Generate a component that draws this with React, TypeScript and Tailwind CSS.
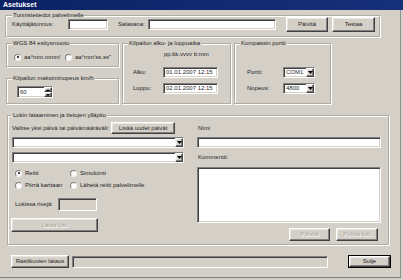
import React from "react";

const sunken =
  "border border-t-[#808080] border-l-[#808080] border-r-white border-b-white shadow-[inset_1px_1px_0_#404040,inset_-1px_-1px_0_#d4d0c8]";
const raised =
  "bg-[#d4d0c8] border border-t-white border-l-white border-r-[#404040] border-b-[#404040] shadow-[inset_-1px_-1px_0_#808080,inset_1px_1px_0_#e8e6e0]";

type BtnProps = {
  children: React.ReactNode;
  className?: string;
  disabled?: boolean;
};

function Btn({ children, className = "", disabled }: BtnProps) {
  return (
    <div
      className={`${raised} flex items-center justify-center shrink-0 whitespace-nowrap ${
        disabled ? "text-[#a8a49c] [text-shadow:1px_1px_0_#fff]" : ""
      } ${className}`}
    >
      {children}
    </div>
  );
}

function Arrow() {
  return (
    <svg width="5" height="3" viewBox="0 0 5 3">
      <path d="M0 0H5L2.5 3Z" fill="#000" />
    </svg>
  );
}

function Select({ value, className = "" }: { value?: string; className?: string }) {
  return (
    <div className={`bg-white ${sunken} flex items-stretch shrink-0 ${className}`}>
      <div className="flex-1 pl-[2px] flex items-center whitespace-nowrap">{value}</div>
      <div className={`${raised} w-[8px] flex items-center justify-center`}>
        <Arrow />
      </div>
    </div>
  );
}

function Field({ value, className = "" }: { value?: string; className?: string }) {
  return (
    <div className={`bg-white ${sunken} flex items-center pl-[2px] shrink-0 whitespace-nowrap ${className}`}>
      {value}
    </div>
  );
}

function Radio({ checked, label, className = "" }: { checked?: boolean; label: string; className?: string }) {
  return (
    <div className={`flex items-center shrink-0 ${className}`}>
      <div className="w-[7px] h-[7px] rounded-full bg-white border border-t-[#808080] border-l-[#808080] border-r-[#f0f0f0] border-b-[#f0f0f0] flex items-center justify-center">
        {checked && <div className="w-[2px] h-[2px] rounded-full bg-black" />}
      </div>
      <span className="ml-[3px] whitespace-nowrap">{label}</span>
    </div>
  );
}

const fs = "border border-[#b0aca4] shadow-[inset_1px_1px_0_#fff,1px_1px_0_#fff] min-w-0";
const lg = "px-[1px] text-[6px] leading-[7px] bg-[#d4d0c8] whitespace-nowrap";

export default function App() {
  return (
    <div className="w-[403px] h-[280px] bg-[#d4d0c8] font-['Liberation_Sans',Arial,sans-serif] text-[6px] leading-[7px] text-[#1e1e1e] flex flex-col overflow-hidden">
      <div className="h-[10px] shrink-0 bg-gradient-to-r from-[#0a2264] to-[#16307a] text-white font-bold text-[7px] leading-[10px] pl-[3px]">
        Asetukset
      </div>
      <div className="flex-1 flex flex-col pl-[5px] border-r border-b border-r-[#909090] border-b-[#808080] mr-[2px] mb-[2px]">
        {/* Group 1 */}
        <fieldset className={`${fs} mt-[2px] w-[375px] h-[25px] pl-[6px] pr-[2px]`}>
          <legend className={lg}>Tunnistetiedot palvelimelle</legend>
          <div className="flex items-center h-[15px] -mt-[2px]">
            <span className="w-[56px] shrink-0 whitespace-nowrap">Käyttäjätunnus:</span>
            <Field className="w-[40px] h-[11px]" />
            <span className="ml-[10px] w-[30px] shrink-0">Salasana:</span>
            <Field className="w-[128px] h-[11px]" />
            <Btn className="ml-[10px] w-[42px] h-[15px]">Päivitä</Btn>
            <Btn className="ml-[4px] w-[43px] h-[15px]">Testaa</Btn>
          </div>
        </fieldset>

        {/* Row 2 */}
        <div className="flex mt-[3px]">
          <div className="flex flex-col w-[113px] ml-[1px]">
            <fieldset className={`${fs} h-[27px] pl-[5px]`}>
              <legend className={lg}>WGS 84 esitysmuoto</legend>
              <div className="flex items-center h-[8px] mt-[6px]">
                <Radio checked label="aa°mm.mmm'" className="ml-[2px] w-[51px]" />
                <Radio label={"aa°mm'ss.ss\""} />
              </div>
            </fieldset>
            <fieldset className={`${fs} mt-[8px] h-[29px] pl-[5px]`}>
              <legend className={lg}>Kilpailun maksiminopeus km/h</legend>
              <div className={`bg-white ${sunken} mt-[4px] ml-[5px] w-[36px] h-[12px] flex items-stretch`}>
                <div className="flex-1 pl-[2px] flex items-center">60</div>
                <div className="w-[8px] flex flex-col">
                  <div className={`${raised} flex-1 flex items-center justify-center`}>
                    <svg width="4" height="2" viewBox="0 0 4 2">
                      <path d="M0 2H4L2 0Z" fill="#000" />
                    </svg>
                  </div>
                  <div className={`${raised} flex-1 flex items-center justify-center`}>
                    <svg width="4" height="2" viewBox="0 0 4 2">
                      <path d="M0 0H4L2 2Z" fill="#000" />
                    </svg>
                  </div>
                </div>
              </div>
            </fieldset>
          </div>

          <fieldset className={`${fs} ml-[3px] w-[109px] h-[64px] pl-[5px]`}>
            <legend className={lg}>Kilpailun alku- ja loppuaika</legend>
            <div className="mt-[4px] ml-[36px] whitespace-nowrap">pp.kk.vvvv tt:mm</div>
            <div className="flex items-center h-[11px] mt-[9px] ml-[5px]">
              <span className="w-[30px] shrink-0">Alku:</span>
              <Field value="01.01.2007 12:15" className="w-[55px] h-[11px]" />
            </div>
            <div className="flex items-center h-[11px] mt-[5px] ml-[5px]">
              <span className="w-[30px] shrink-0">Loppu:</span>
              <Field value="02.01.2007 12:15" className="w-[55px] h-[11px]" />
            </div>
          </fieldset>

          <fieldset className={`${fs} ml-[3px] w-[97px] h-[64px] pl-[5px]`}>
            <legend className={lg}>Kompassin portti</legend>
            <div className="flex items-center h-[11px] mt-[20px] ml-[7px]">
              <span className="w-[36px] shrink-0">Portti:</span>
              <Select value="COM1" className="w-[32px] h-[11px]" />
            </div>
            <div className="flex items-center h-[11px] mt-[5px] ml-[7px]">
              <span className="w-[36px] shrink-0">Nopeus:</span>
              <Select value="4800" className="w-[32px] h-[11px]" />
            </div>
          </fieldset>
        </div>

        {/* Lokin group */}
        <fieldset className={`${fs} mt-[8px] ml-[2px] w-[382px] h-[133px] pl-[4px]`}>
          <legend className={lg}>Lokin lataaminen ja tietojen ylläpito</legend>
          <div className="flex">
            <div className="flex flex-col w-[173px] shrink-0">
              <div className="flex items-center h-[12px] mt-[3px]">
                <span className="w-[99px] shrink-0 whitespace-nowrap">Valitse yksi päivä tai päivämääräväli:</span>
                <Btn className="w-[64px] h-[12px]">Lisää uudet päivät</Btn>
              </div>
              <Select className="mt-[3px] w-[172px] h-[11px]" />
              <Select className="mt-[4px] w-[172px] h-[11px]" />
              <div className="flex items-center h-[8px] mt-[6px] ml-[3px]">
                <Radio checked label="Reitti" className="w-[55px]" />
                <Radio label="Simulointi" />
              </div>
              <div className="flex items-center h-[8px] mt-[4px] ml-[3px]">
                <Radio label="Piirrä karttaan" className="w-[55px]" />
                <Radio label="Lähetä reitti palvelimelle" />
              </div>
              <div className="flex items-center h-[13px] mt-[9px] ml-[3px]">
                <span className="w-[43px] shrink-0 whitespace-nowrap">Lokissa rivejä:</span>
                <div className={`${sunken} bg-[#d4d0c8] w-[39px] h-[13px]`} />
              </div>
              <Btn disabled className="mt-[7px] -ml-[1px] w-[87px] h-[14px]">
                Lataa loki
              </Btn>
            </div>
            <div className="flex flex-col ml-[12px] w-[184px] shrink-0">
              <div className="mt-[6px] pl-[1px]">Nimi</div>
              <Field className="mt-[5px] w-full h-[11px]" />
              <div className="mt-[6px] pl-[1px]">Kommentti:</div>
              <Field className="mt-[6px] w-full h-[56px]" />
              <div className="flex justify-end gap-[6px] mt-[5px] pr-[3px]">
                <Btn disabled className="w-[41px] h-[13px]">
                  Päivitä
                </Btn>
                <Btn disabled className="w-[42px] h-[13px]">
                  Poista loki
                </Btn>
              </div>
            </div>
          </div>
        </fieldset>

        {/* Bottom row */}
        <div className="flex items-center h-[13px] mt-[10px]">
          <Btn className="ml-[6px] w-[58px] h-[13px]">Rastikuvien lataus</Btn>
          <div className={`${sunken} bg-[#d4d0c8] ml-[3px] w-[256px] h-[12px]`} />
          <div className="ml-[20px] w-[43px] h-[13px] border border-black flex">
            <Btn className="flex-1 h-full">Sulje</Btn>
          </div>
        </div>
      </div>
    </div>
  );
}
